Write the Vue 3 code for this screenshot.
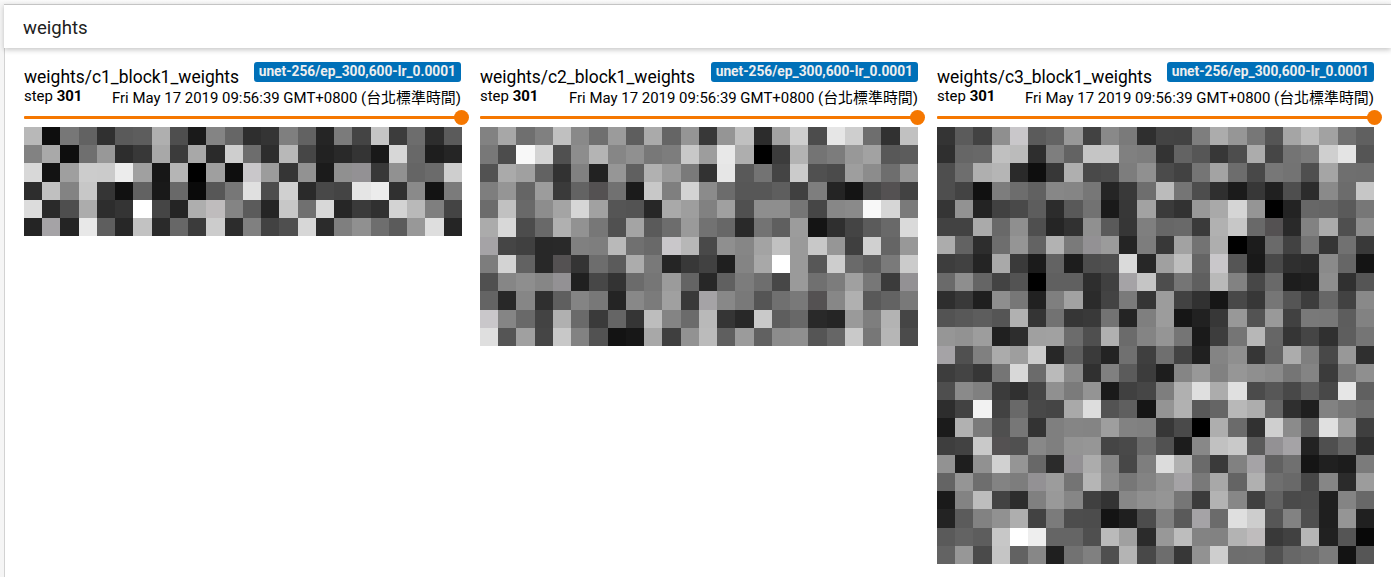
<script setup>
const time = 'Fri May 17 2019 09:56:39 GMT+0800 (台北標準時間)'
const run = 'unet-256/ep_300,600-lr_0.0001'

// Each row holds 24 weights, two hex digits per weight.
const c1 = [
  'b80e7762305a5daf4e1a8466 2e347f62257b44c53c6d2d5b',
  '82a90e6f982d38a83ba82ace 6d2db84622293419d7681e25',
  'd8139fcccbeca017b5009f0e ca9c35921b90933891656bce',
  '2dc083c735116219690a5777 e04dd02a4844e5ec308a137b',
  'dc2a4eac2d34ff4524aebf84 5b25c770d8263a30d3b97f44',
  '24a624e85e27c22a673bcc2c 80424fd72b7f906e5b98de25',
]
const c2 = [
  '82a76f80c0896f9b5eaa6595 3895c02ca2ce4ce6ce6e31c1',
  '784cf8d4508db48690787dc8 9de8ae003cb3747c98a2585c',
  '52aaa0623281229660b19a7a 32e6597344cb504b9e8c6e96',
  '7e95659c3a6354711bc87fd3 8b6c57575e407e2414475442',
  '6cc1698da4d6a1555327a99e 81a0508e8e7646878af8d67a',
  'abd84c69b0927750a45a6d9a 726729735f9c142f445b69da',
  'a645402829807eb97069cab7 498f86a3c19ac8963fd06598',
  '7dd3622854346d5bac792538 411f84a8ff9a57cd6a5e7acb',
  '50868e86932047336b769b64 27607c6e479a707ca0773b93',
  '6428862f5f847824887ba039 a688795570795487b0596379',
  'ca856943b06a3a6535bd846b b93528c95e6829259a7eb345',
  'df55a045c882521317a83f92 bb5f9b618c8f5566c977b64b',
]
const c3 = [
  '345b428fca5b639842897a2f 43427eac967755a5bca27060',
  '2f6668c0bb2e7e63c5c5807d 336356374dac46747bcfe455',
  '4e6eafb52a0e37af494c7d90 4b4275a36d4877734fa56f6e',
  '4e43117d6d6187857725396e bb754d2f1b37204e2c8a6cc6',
  '35922341495d2c59721a37a2 3b3298a9d595002367655a77',
  '4242aa698f4f2531905a367f 67693ab1c769542982ab4f8e',
  'ac622d6e9563b27a939b247d 38a273ae001c6a4274357139',
  '3d4124a93a1b631d4d50da27 a0be65ca5519492f2c8a6614',
  '6a8e6543530060602e40a6c5 4d755fb98247691d208e3055',
  '2e391f8e77217fa22b437a35 9c423116483776553d674289',
  '53585d55b13472363973247f 9c1621379853994179785d82',
  '96929d202da0a16c4fb06b84 95751a3d75b7663545305e75',
  'a65080ab9ecc275e3a23703f 6f4320848f3664ac7f48982f',
  '3d443675d86bba8a30805b3c 1d859881968f8a75843b788f',
  '4e8a803b3045907b941a4046 7eb0dface04b57485d48e660',
  '2d42f242694845a9dd535f15 94b15965b8ad652f1f82776e',
  '1bb17a4f77337f85849e8280 374a00ae6b31cf8b61e09f3f',
  '3e42c95450887f949645496b 511c88c1c95a93a6224f6530',
  '921e91d195682b93ac87477e dcb16a3a81a6617015201c7b',
  '64956e837d939c74b58b7783 92a679a864b06f6947862b9c',
  '1a83bd432d80998640338790 95763bb38740624a4c1f8468',
  '235b8291ae427b4d4c141f4c 805aa66bdfcd56824e1f9520',
  '5a635dc7ffee65654fbaa02b 98bd8382b3bf3941b6215508',
  '63974ac562871f72804fb448 6d3792ce6e6f51676c7b1356',
]

const tinted = { 93: '#939194', a6: '#a5a3a6', ca: '#c9c7ca', bf: '#bfbcbd', 54: '#545152' }

function cells(rows, step, rowStep, shift) {
  return rows.flatMap((row, y) =>
    row.replace(' ', '').match(/../g).map((v, x) => ({
      x: x * step - shift,
      y: y * rowStep,
      fill: tinted[v] || `#${v}${v}${v}`,
    })),
  )
}

const cards = [
  { name: 'weights/c1_block1_weights', step: 18.25, rowStep: 18.2, shift: 0.1, rows: c1, height: 109 },
  { name: 'weights/c2_block1_weights', step: 18.25, rowStep: 18.25, shift: 0.1, rows: c2, height: 219 },
  { name: 'weights/c3_block1_weights', step: 18.2125, rowStep: 18.2125, shift: 0.05, rows: c3, height: 437 },
].map((c) => ({ ...c, cells: cells(c.rows, c.step, c.rowStep, c.shift) }))
</script>

<template>
  <div class="page">
    <div class="pane">
      <header class="bar">weights</header>
      <main class="cards">
        <section v-for="c in cards" :key="c.name" class="card">
          <div class="heading">
            <span class="name">{{ c.name }}</span>
            <span class="run">{{ run }}</span>
          </div>
          <div class="meta">
            <span class="step">step <b>301</b></span>
            <span class="time">{{ time }}</span>
          </div>
          <div class="slider"><i class="track"></i><i class="knob"></i></div>
          <svg class="map" width="438" :height="c.height" shape-rendering="crispEdges">
            <rect
              v-for="(p, i) in c.cells"
              :key="i"
              :x="p.x"
              :y="p.y"
              :width="c.step"
              :height="c.rowStep"
              :fill="p.fill"
            />
          </svg>
        </section>
      </main>
    </div>
  </div>
</template>

<style>
body {
  margin: 0;
  overflow: hidden;
}
</style>

<style scoped>
.page {
  box-sizing: border-box;
  height: 577px;
  padding: 4px 0 0 4px;
  background: linear-gradient(#fafafa 0, #f5f5f5 4px);
  font-family: Roboto, 'Noto Sans CJK TC', sans-serif;
  color: #000;
  overflow: hidden;
}
.pane {
  height: 573px;
  background: linear-gradient(90deg, #d2d2d2 1px, #fff 1px);
}
.bar {
  position: relative;
  box-sizing: border-box;
  height: 44px;
  padding-left: 19px;
  border-top: 1px solid #c4c4c4;
  background: #fff;
  box-shadow: 0 2px 5px rgba(0, 0, 0, 0.22);
  font-size: 18.6px;
  line-height: 46px;
  color: #212121;
}
.cards {
  display: grid;
  grid-template-columns: 456px 457px 438px;
  padding: 14px 0 0 20px;
}
.card {
  width: 438px;
}
.heading {
  display: flex;
  justify-content: space-between;
  height: 26px;
  white-space: nowrap;
}
.name {
  font-size: 17.45px;
  line-height: 30px;
}
.run {
  box-sizing: border-box;
  height: 20px;
  margin-right: 1px;
  padding: 0 5px;
  border-radius: 3px;
  background: #0070b8;
  color: #eee;
  font-size: 13.75px;
  font-weight: 700;
  line-height: 19px;
}
.card:nth-child(2) .run,
.card:nth-child(2) .time {
  margin-right: 0;
}
.meta {
  display: flex;
  justify-content: space-between;
  height: 24px;
  font-size: 14.95px;
  line-height: 17px;
  white-space: nowrap;
}
.time {
  margin-right: 1px;
  line-height: 21px;
}
.slider {
  position: relative;
  height: 15px;
}
.track {
  position: absolute;
  top: 4px;
  left: 0;
  width: 438px;
  height: 3px;
  border-radius: 1px;
  background: #f57700;
}
.knob {
  position: absolute;
  top: -2px;
  right: -7px;
  width: 15px;
  height: 15px;
  border-radius: 50%;
  background: #f57700;
}
.map {
  display: block;
}
</style>
